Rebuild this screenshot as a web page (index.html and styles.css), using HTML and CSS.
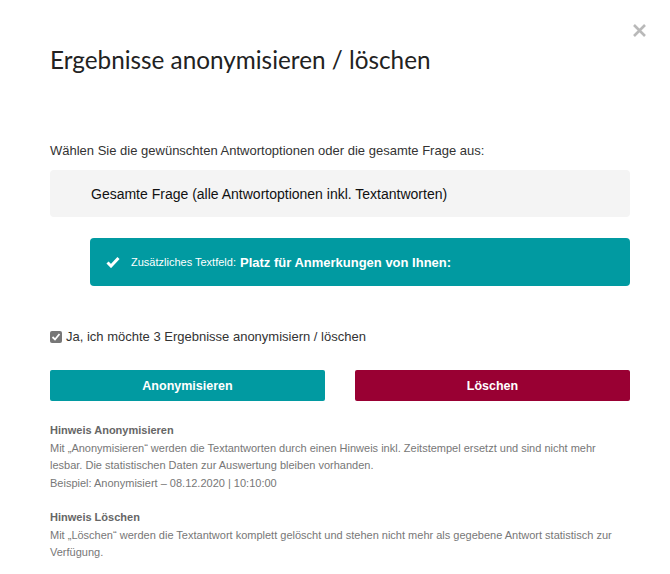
FILE: index.html
```html
<!DOCTYPE html>
<html lang="de">
<head>
<meta charset="utf-8">
<link rel="stylesheet" href="styles.css">
</head>
<body>
<div class="modal">
  <button class="close" aria-label="Schließen">
    <svg width="15" height="15" viewBox="0 0 15 15"><path d="M2 2 L13 13 M13 2 L2 13" stroke="#b9b9b9" stroke-width="2.6" stroke-linecap="butt"/></svg>
  </button>
  <h1 class="title">Ergebnisse anonymisieren / löschen</h1>
  <p class="intro">Wählen Sie die gewünschten Antwortoptionen oder die gesamte Frage aus:</p>
  <div class="option option-all">Gesamte Frage (alle Antwortoptionen inkl. Textantworten)</div>
  <div class="option option-selected">
    <svg class="check" width="14" height="12" viewBox="0 0 14 12"><path d="M1.5 6.5 L5 10 L12.5 2" fill="none" stroke="#fff" stroke-width="3" stroke-linejoin="miter"/></svg>
    <span class="small">Zusätzliches Textfeld:</span>
    <span class="big">Platz für Anmerkungen von Ihnen:</span>
  </div>
  <label class="confirm">
    <span class="cb"><svg width="12" height="12" viewBox="0 0 12 12"><rect x="0" y="0" width="12" height="12" rx="2" fill="#777"/><path d="M2.5 6 L5 8.5 L9.5 3" fill="none" stroke="#fff" stroke-width="1.8"/></svg></span>
    <span>Ja, ich möchte 3 Ergebnisse anonymisiern / löschen</span>
  </label>
  <div class="actions">
    <button class="btn btn-anon">Anonymisieren</button>
    <button class="btn btn-del">Löschen</button>
  </div>
  <div class="notes">
    <p class="note"><strong>Hinweis Anonymisieren</strong><br>Mit „Anonymisieren“ werden die Textantworten durch einen Hinweis inkl. Zeitstempel ersetzt und sind nicht mehr lesbar. Die statistischen Daten zur Auswertung bleiben vorhanden.<br>Beispiel: Anonymisiert – 08.12.2020 | 10:10:00</p>
    <p class="note"><strong>Hinweis Löschen</strong><br>Mit „Löschen“ werden die Textantwort komplett gelöscht und stehen nicht mehr als gegebene Antwort statistisch zur Verfügung.</p>
  </div>
</div>
</body>
</html>
```
FILE: styles.css
```css
html, body {
  margin: 0;
  padding: 0;
  background: #fff;
}
body {
  font-family: "Liberation Sans", Arial, sans-serif;
  color: #333;
}
.modal {
  position: relative;
  width: 580px;
  padding: 45px 40px 0 50px;
}
.close {
  position: absolute;
  top: 23px;
  right: 23px;
  padding: 0;
  border: 0;
  background: none;
  line-height: 0;
}
.title {
  margin: 0;
  font-family: Lato, sans-serif;
  font-weight: 400;
  font-size: 24.3px;
  line-height: 30px;
  color: #222;
}
.intro {
  margin: 68px 0 0;
  font-size: 13px;
  line-height: 16px;
  color: #333;
}
.option {
  box-sizing: border-box;
  border-radius: 4px;
  display: flex;
  align-items: center;
}
.option-all {
  margin-top: 11px;
  height: 47px;
  padding-left: 41px;
  background: #f4f4f4;
  font-size: 14px;
  color: #111;
}
.option-selected {
  margin: 21px 0 0 40px;
  height: 48px;
  padding-left: 16px;
  background: #019aa1;
  color: #fff;
}
.check {
  margin-right: 11px;
}
.small {
  font-size: 11px;
  margin-right: 4px;
}
.big {
  font-size: 13px;
  font-weight: 700;
}
.confirm {
  margin-top: 43px;
  display: flex;
  align-items: center;
  gap: 4px;
  font-size: 13px;
  color: #333;
}
.cb {
  line-height: 0;
}
.actions {
  margin-top: 26px;
  display: flex;
  justify-content: space-between;
}
.btn {
  width: 275px;
  height: 31px;
  border: 0;
  border-radius: 2px;
  font-family: "Liberation Sans", Arial, sans-serif;
  font-size: 12.5px;
  font-weight: 700;
  color: #fff;
}
.btn-anon {
  background: #019aa1;
}
.btn-del {
  background: #990033;
}
.notes {
  margin-top: 21px;
}
.note {
  margin: 0 0 17px;
  font-size: 11px;
  line-height: 17.5px;
  color: #777;
}
.note strong {
  color: #666;
}
```
